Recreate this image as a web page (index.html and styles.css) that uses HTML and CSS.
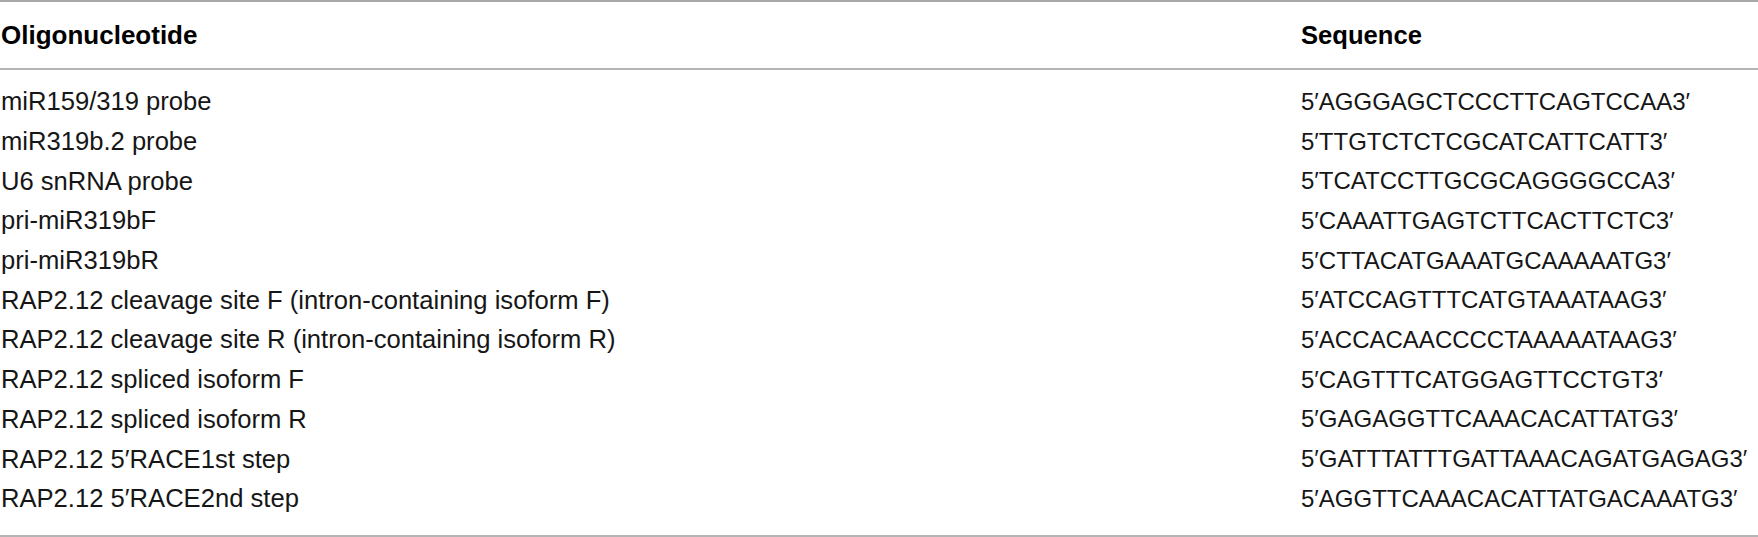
FILE: index.html
```html
<!DOCTYPE html>
<html>
<head>
<meta charset="utf-8">
<link rel="stylesheet" href="styles.css">
</head>
<body>
<table class="oligo-table">
  <thead>
    <tr>
      <th class="col-name">Oligonucleotide</th>
      <th class="col-seq">Sequence</th>
    </tr>
  </thead>
  <tbody>
    <tr class="first"><td class="name">miR159/319 probe</td><td class="seq">5′AGGGAGCTCCCTTCAGTCCAA3′</td></tr>
    <tr><td class="name">miR319b.2 probe</td><td class="seq">5′TTGTCTCTCGCATCATTCATT3′</td></tr>
    <tr><td class="name">U6 snRNA probe</td><td class="seq">5′TCATCCTTGCGCAGGGGCCA3′</td></tr>
    <tr><td class="name">pri-miR319bF</td><td class="seq">5′CAAATTGAGTCTTCACTTCTC3′</td></tr>
    <tr><td class="name">pri-miR319bR</td><td class="seq">5′CTTACATGAAATGCAAAAATG3′</td></tr>
    <tr><td class="name">RAP2.12 cleavage site F (intron-containing isoform F)</td><td class="seq">5′ATCCAGTTTCATGTAAATAAG3′</td></tr>
    <tr><td class="name">RAP2.12 cleavage site R (intron-containing isoform R)</td><td class="seq">5′ACCACAACCCCTAAAAATAAG3′</td></tr>
    <tr><td class="name">RAP2.12 spliced isoform F</td><td class="seq">5′CAGTTTCATGGAGTTCCTGT3′</td></tr>
    <tr><td class="name">RAP2.12 spliced isoform R</td><td class="seq">5′GAGAGGTTCAAACACATTATG3′</td></tr>
    <tr><td class="name">RAP2.12 5′RACE1st step</td><td class="seq">5′GATTTATTTGATTAAACAGATGAGAG3′</td></tr>
    <tr class="last"><td class="name">RAP2.12 5′RACE2nd step</td><td class="seq">5′AGGTTCAAACACATTATGACAAATG3′</td></tr>
  </tbody>
</table>
</body>
</html>
```
FILE: styles.css
```css
html, body {
  margin: 0;
  padding: 0;
  background: #ffffff;
}

.oligo-table {
  width: 1758px;
  border-collapse: collapse;
  font-family: "Liberation Sans", Arial, sans-serif;
  color: #161616;
  border-top: 2px solid #a8a8a8;
  border-bottom: 2px solid #b4b4b4;
}

.oligo-table th {
  text-align: left;
  font-weight: bold;
  font-size: 26px;
  height: 66px;
  padding: 0 0 0 1px;
  vertical-align: middle;
  border-bottom: 2px solid #b4b4b4;
  color: #000;
}

.oligo-table th.col-seq {
  font-size: 25.6px;
  padding-left: 0;
}

.oligo-table .col-name {
  width: 1300px;
}

.oligo-table td {
  height: 39.7px;
  padding: 0 0 0 1px;
  vertical-align: middle;
  white-space: nowrap;
}

.oligo-table td.name {
  font-size: 25.6px;
}

.oligo-table td.seq {
  font-size: 24px;
  padding-left: 0;
}

.oligo-table tr.first td {
  padding-top: 12px;
}

.oligo-table tr.last td {
  padding-bottom: 16px;
}
```
